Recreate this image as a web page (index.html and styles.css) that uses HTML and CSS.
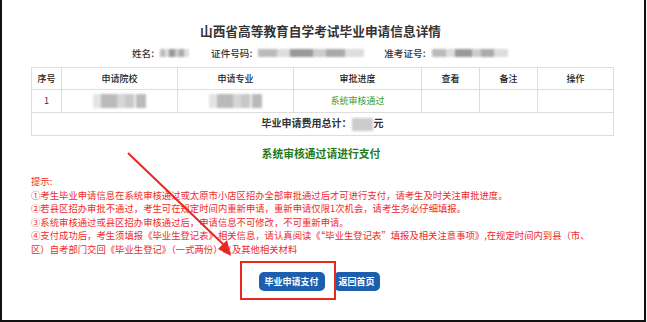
FILE: index.html
```html
<!DOCTYPE html>
<html lang="zh-CN">
<head>
    <meta charset="UTF-8">
    <meta name="viewport" content="width=device-width, initial-scale=1.0">
    <title>毕业申请信息详情</title>
    <link rel="stylesheet" href="styles.css">
</head>
<body>
    <!-- Marco de la página -->
    <div class="frame">
        <h1 class="titulo">山西省高等教育自学考试毕业申请信息详情</h1>

        <!-- Datos del alumno -->
        <div class="info">
            <span class="etiqueta">姓名:</span>
            <span class="borroso b-nombre"></span>
            <span class="etiqueta">证件号码:</span>
            <span class="borroso b-id"></span>
            <span class="etiqueta">准考证号:</span>
            <span class="borroso b-exam"></span>
        </div>

        <!-- Tabla de solicitudes -->
        <table class="tabla">
            <thead>
                <tr>
                    <th class="c1">序号</th>
                    <th class="c2">申请院校</th>
                    <th class="c3">申请专业</th>
                    <th class="c4">审批进度</th>
                    <th class="c5">查看</th>
                    <th class="c6">备注</th>
                    <th class="c7">操作</th>
                </tr>
            </thead>
            <tbody>
                <tr>
                    <td>1</td>
                    <td><span class="borroso b-celda"></span></td>
                    <td><span class="borroso b-celda"></span></td>
                    <td class="verde">系统审核通过</td>
                    <td></td>
                    <td></td>
                    <td></td>
                </tr>
                <tr>
                    <td colspan="7" class="total">毕业申请费用总计：<span class="borroso b-total"></span>元</td>
                </tr>
            </tbody>
        </table>

        <div class="aviso">系统审核通过请进行支付</div>

        <!-- Avisos en rojo -->
        <div class="tips">
            <p>提示:</p>
            <p>①考生毕业申请信息在系统审核通过或太原市小店区招办全部审批通过后才可进行支付，请考生及时关注审批进度。</p>
            <p>②若县区招办审批不通过，考生可在规定时间内重新申请，重新申请仅限1次机会，请考生务必仔细填报。</p>
            <p>③系统审核通过或县区招办审核通过后，申请信息不可修改，不可重新申请。</p>
            <p>④支付成功后，考生须填报《毕业生登记表》相关信息，请认真阅读《“毕业生登记表”填报及相关注意事项》,在规定时间内到县（市、区）自考部门交回《毕业生登记》（一式两份）以及其他相关材料</p>
        </div>

        <!-- Botones -->
        <div class="botones">
            <span class="marcado"><span class="boton b-pagar">毕业申请支付</span></span>
            <span class="boton b-volver">返回首页</span>
        </div>

        <!-- Flecha roja -->
        <svg class="flecha" width="647" height="322" viewBox="0 0 647 322">
            <line x1="128" y1="153" x2="224" y2="245" stroke="#e8281f" stroke-width="2"/>
            <polygon points="231,256 218,249 227,240" fill="#e8281f"/>
        </svg>
    </div>
</body>
</html>
```

FILE: styles.css
```css
body {
    margin: 0;
    background-color: #f0f0f0;
    font-family: "Noto Sans CJK SC", "Noto Sans", sans-serif;
    color: #333;
}

/* Marco */
.frame {
    position: relative;
    box-sizing: border-box;
    width: 646px;
    height: 322px;
    background-color: #fff;
    border-left: 2px solid #111;
    border-right: 2px solid #111;
    border-bottom: 2px solid #111;
    overflow: hidden;
}

.titulo {
    margin: 23px 0 0 0;
    font-size: 12.7px;
    line-height: 16px;
    font-weight: bold;
    text-align: center;
    padding-right: 5px;
}

/* Datos */
.info {
    display: flex;
    align-items: center;
    height: 14px;
    margin-top: 7px;
    padding-left: 130px;
    font-size: 9.6px;
    font-weight: 500;
}

.etiqueta {
    margin-right: 6px;
}

.borroso {
    display: inline-block;
    height: 8px;
    filter: blur(0.8px);
    background: linear-gradient(90deg, #bbb 0 18%, #ddd 18% 30%, #999 30% 52%, #ccc 52% 64%, #aaa 64% 82%, #ddd 82% 100%);
}

.b-nombre {
    width: 29px;
    margin-right: 22px;
}

.b-id {
    width: 106px;
    margin-right: 20px;
}

.b-exam {
    width: 76px;
}

/* Tabla */
.tabla {
    margin: 7px 0 0 29px;
    width: 575px;
    border-collapse: collapse;
    table-layout: fixed;
    font-size: 9px;
}

.tabla th, .tabla td {
    border: 1px solid #ddd;
    padding: 0;
    text-align: center;
    line-height: 12px;
}

.tabla th {
    height: 21px;
    font-weight: 500;
    color: #222;
}

.tabla td {
    height: 22px;
}

.c1 { width: 29px; }
.c2 { width: 115px; }
.c3 { width: 115px; }
.c4 { width: 127px; }
.c5 { width: 57px; }
.c6 { width: 57px; }
.c7 { width: 75px; }

.b-celda {
    width: 53px;
    height: 14px;
    vertical-align: middle;
    background: linear-gradient(90deg, #ddd 0 15%, #aaa 15% 45%, #ccc 45% 60%, #bbb 60% 78%, #eee 78% 82%, #aaa 82% 100%);
    opacity: 0.8;
}

.verde {
    color: #3a9a2a;
}

.tabla .total {
    font-size: 10px;
    font-weight: bold;
}

.b-total {
    width: 21px;
    height: 13px;
    vertical-align: middle;
    background: #ccc;
    margin-right: 1px;
}

/* Aviso verde */
.aviso {
    margin-top: 10px;
    text-align: center;
    font-size: 10.8px;
    line-height: 14px;
    font-weight: bold;
    color: #237a1d;
    padding-right: 4px;
}

/* Avisos */
.tips {
    margin: 15px 0 0 29px;
    width: 572px;
    color: #f02a2a;
    font-size: 9.35px;
    line-height: 13.6px;
}

.tips p {
    margin: 0;
}

/* Botones */
.botones {
    display: flex;
    align-items: flex-start;
    justify-content: center;
    gap: 9px;
    height: 19px;
    margin-top: 15px;
    padding-right: 8px;
    line-height: 19px;
}

.marcado {
    position: relative;
    display: flex;
}

.marcado::after {
    content: "";
    position: absolute;
    left: -19px;
    top: -11px;
    width: 92px;
    height: 35px;
    border: 2px solid #e8281f;
}

.boton {
    display: block;
    height: 19px;
    line-height: 19px;
    border-radius: 5px;
    background-color: #1d5fae;
    color: #fff;
    font-size: 9px;
    font-weight: bold;
    text-align: center;
}

.b-pagar {
    width: 66px;
}

.b-volver {
    width: 46px;
}

/* Flecha */
.flecha {
    position: absolute;
    left: -2px;
    top: 0;
    pointer-events: none;
}
```
